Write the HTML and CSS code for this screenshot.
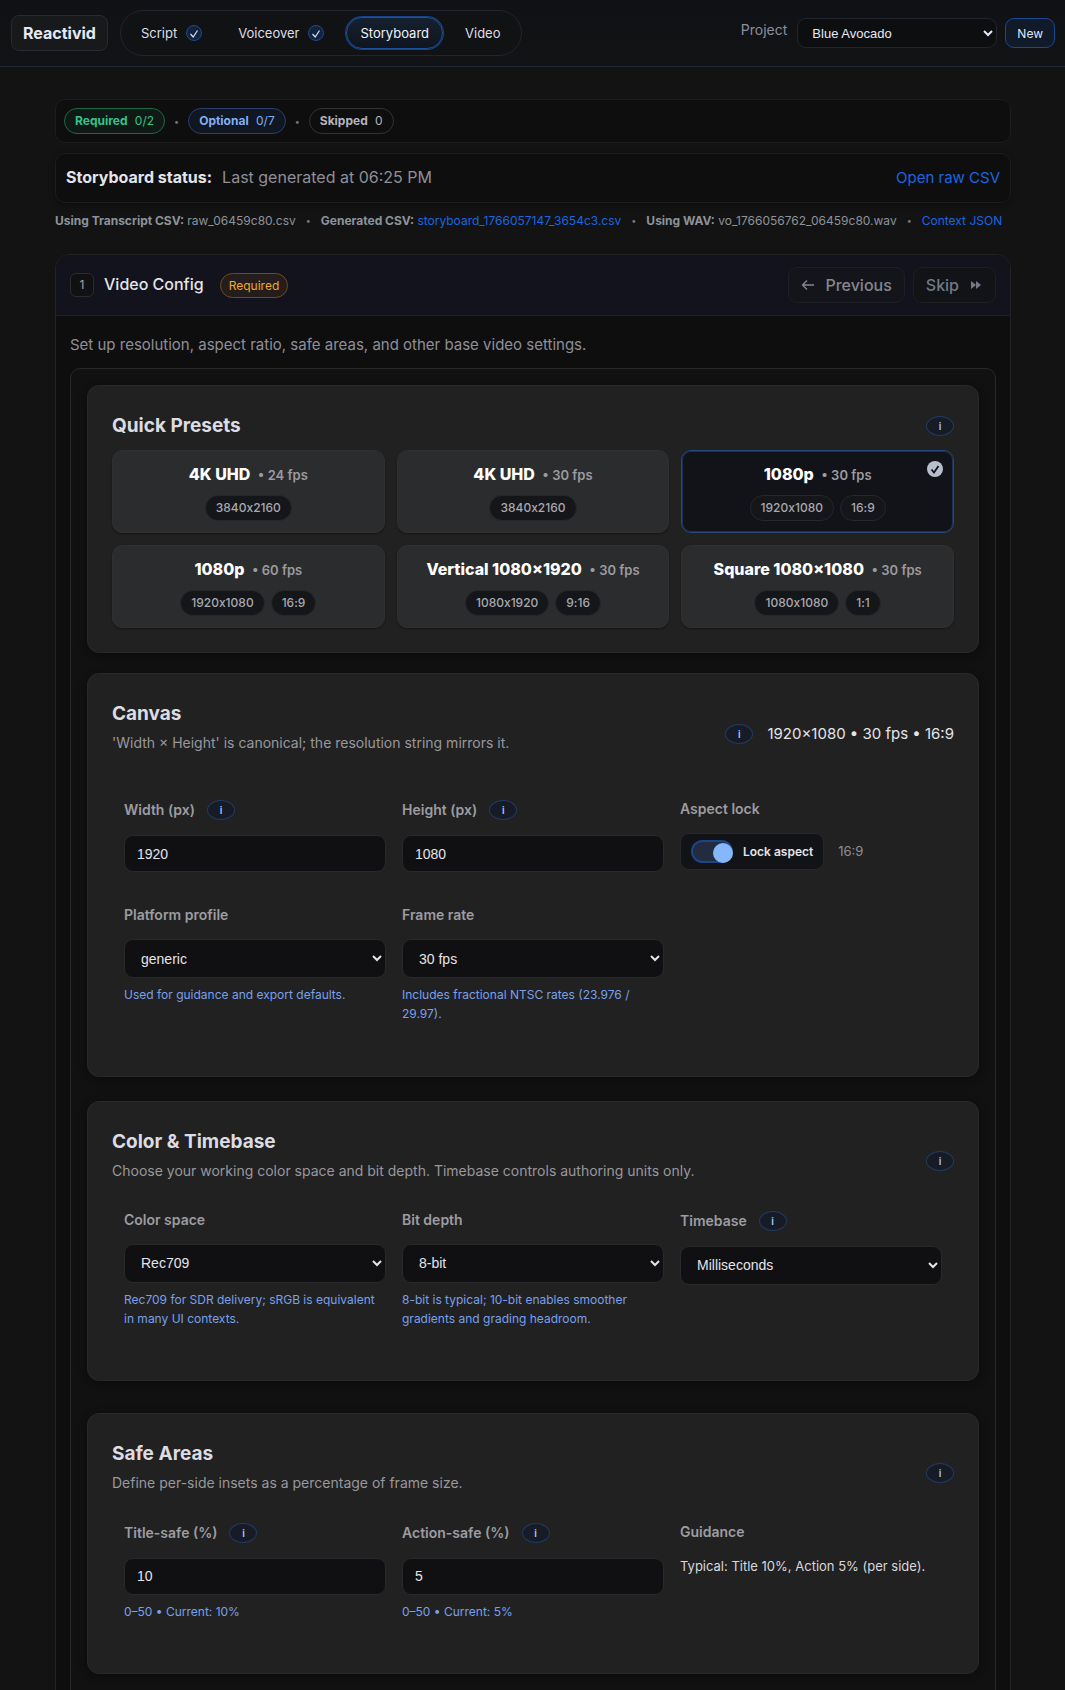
FILE: index.html
```html
<!DOCTYPE html>
<html lang="en">
<head>
  <meta charset="utf-8">
  <meta name="viewport" content="width=device-width, initial-scale=1">
  <title>Reactivid - Storyboard</title>
  <link rel="stylesheet" href="styles.css">
</head>
<body>
  <header class="topbar">
    <a href="#" class="brand">Reactivid</a>
    <nav class="nav">
      <a href="#" class="nav-link">Script
        <svg class="nav-check" viewBox="0 0 16 16"><circle cx="8" cy="8" r="7.5"/><path d="M4.500 9l2.700 3L11.500 5.500"/></svg>
      </a>
      <a href="#" class="nav-link">Voiceover
        <svg class="nav-check" viewBox="0 0 16 16"><circle cx="8" cy="8" r="7.5"/><path d="M4.500 9l2.700 3L11.500 5.500"/></svg>
      </a>
      <a href="#" class="nav-link active">Storyboard</a>
      <a href="#" class="nav-link">Video</a>
    </nav>
    <div class="project">
      <label class="project-label" for="project">Project</label>
      <select id="project" class="project-select">
        <option>Blue Avocado</option>
      </select>
      <button type="button" class="btn-new">New</button>
    </div>
  </header>

  <main class="page">
    <div class="summary">
      <span class="pill pill-required"><b>Required</b> 0/2</span>
      <span class="sep">•</span>
      <span class="pill pill-optional"><b>Optional</b> 0/7</span>
      <span class="sep">•</span>
      <span class="pill"><b>Skipped</b> 0</span>
    </div>

    <div class="status">
      <strong>Storyboard status:</strong>
      <span class="status-text">Last generated at 06:25 PM</span>
      <a href="#" class="status-link">Open raw CSV</a>
    </div>

    <div class="sources">
      <span><b>Using Transcript CSV:</b> raw_06459c80.csv</span>
      <span class="sep">•</span>
      <span><b>Generated CSV:</b> <a href="#">storyboard_1766057147_3654c3.csv</a></span>
      <span class="sep">•</span>
      <span><b>Using WAV:</b> vo_1766056762_06459c80.wav</span>
      <span class="sep">•</span>
      <a href="#">Context JSON</a>
    </div>

    <section class="stage">
      <div class="stage-head">
        <span class="stage-num">1</span>
        <h2 class="stage-title">Video Config</h2>
        <span class="badge">Required</span>
        <div class="stage-actions">
          <button type="button" class="btn">
            <svg class="btn-icon" viewBox="0 0 14 14"><path class="line" d="M13 7H2M6 2.500L1.500 7L6 11.500"/></svg>
            Previous
          </button>
          <button type="button" class="btn btn-skip">
            Skip
            <svg class="btn-icon" viewBox="0 0 14 14"><path d="M2 3v8l5-4zM7 3v8l5-4z"/></svg>
          </button>
        </div>
      </div>
      <div class="stage-body">
        <p class="stage-desc">Set up resolution, aspect ratio, safe areas, and other base video settings.</p>

        <form class="panel">
          <section class="card card-presets">
            <div class="card-head">
              <h3>Quick Presets</h3>
              <button type="button" class="info">i</button>
            </div>
            <div class="presets">
              <button type="button" class="preset">
                <span class="preset-title">4K UHD <small>• 24 fps</small></span>
                <span class="tags"><span class="tag">3840x2160</span></span>
              </button>
              <button type="button" class="preset">
                <span class="preset-title">4K UHD <small>• 30 fps</small></span>
                <span class="tags"><span class="tag">3840x2160</span></span>
              </button>
              <button type="button" class="preset selected">
                <span class="preset-title">1080p <small>• 30 fps</small></span>
                <span class="tags"><span class="tag">1920x1080</span><span class="tag">16:9</span></span>
                <svg class="preset-check" viewBox="0 0 16 16"><circle cx="8" cy="8" r="8"/><path d="M4.500 8.500l2.500 3L11.500 5"/></svg>
              </button>
              <button type="button" class="preset">
                <span class="preset-title">1080p <small>• 60 fps</small></span>
                <span class="tags"><span class="tag">1920x1080</span><span class="tag">16:9</span></span>
              </button>
              <button type="button" class="preset">
                <span class="preset-title">Vertical 1080×1920 <small>• 30 fps</small></span>
                <span class="tags"><span class="tag">1080x1920</span><span class="tag">9:16</span></span>
              </button>
              <button type="button" class="preset">
                <span class="preset-title">Square 1080×1080 <small>• 30 fps</small></span>
                <span class="tags"><span class="tag">1080x1080</span><span class="tag">1:1</span></span>
              </button>
            </div>
          </section>

          <section class="card card-canvas">
            <div class="card-head">
              <div>
                <h3>Canvas</h3>
                <p>'Width × Height' is canonical; the resolution string mirrors it.</p>
              </div>
              <div class="readout">
                <button type="button" class="info">i</button>
                <span>1920×1080 • 30 fps • 16:9</span>
              </div>
            </div>
            <div class="fields">
              <div class="field">
                <div class="field-label"><label for="width">Width (px)</label><button type="button" class="info">i</button></div>
                <input type="text" id="width" value="1920">
              </div>
              <div class="field">
                <div class="field-label"><label for="height">Height (px)</label><button type="button" class="info">i</button></div>
                <input type="text" id="height" value="1080">
              </div>
              <div class="field">
                <div class="field-label">Aspect lock</div>
                <div class="lock-row">
                  <label class="lock">
                    <input type="checkbox" class="switch" checked>
                    Lock aspect
                  </label>
                  <span class="lock-ratio">16:9</span>
                </div>
              </div>
              <div class="field">
                <div class="field-label"><label for="platform">Platform profile</label></div>
                <select id="platform"><option>generic</option></select>
                <p class="hint">Used for guidance and export defaults.</p>
              </div>
              <div class="field">
                <div class="field-label"><label for="fps">Frame rate</label></div>
                <select id="fps"><option>30 fps</option></select>
                <p class="hint">Includes fractional NTSC rates (23.976 / 29.97).</p>
              </div>
            </div>
          </section>

          <section class="card">
            <div class="card-head">
              <div>
                <h3>Color &amp; Timebase</h3>
                <p>Choose your working color space and bit depth. Timebase controls authoring units only.</p>
              </div>
              <button type="button" class="info">i</button>
            </div>
            <div class="fields">
              <div class="field">
                <div class="field-label"><label for="colorspace">Color space</label></div>
                <select id="colorspace"><option>Rec709</option></select>
                <p class="hint">Rec709 for SDR delivery; sRGB is equivalent in many UI contexts.</p>
              </div>
              <div class="field">
                <div class="field-label"><label for="bitdepth">Bit depth</label></div>
                <select id="bitdepth"><option>8-bit</option></select>
                <p class="hint">8-bit is typical; 10-bit enables smoother gradients and grading headroom.</p>
              </div>
              <div class="field">
                <div class="field-label"><label for="timebase">Timebase</label><button type="button" class="info">i</button></div>
                <select id="timebase"><option>Milliseconds</option></select>
              </div>
            </div>
          </section>

          <section class="card">
            <div class="card-head">
              <div>
                <h3>Safe Areas</h3>
                <p>Define per-side insets as a percentage of frame size.</p>
              </div>
              <button type="button" class="info">i</button>
            </div>
            <div class="fields">
              <div class="field">
                <div class="field-label"><label for="titlesafe">Title-safe (%)</label><button type="button" class="info">i</button></div>
                <input type="text" id="titlesafe" value="10">
                <p class="hint">0–50 • Current: 10%</p>
              </div>
              <div class="field">
                <div class="field-label"><label for="actionsafe">Action-safe (%)</label><button type="button" class="info">i</button></div>
                <input type="text" id="actionsafe" value="5">
                <p class="hint">0–50 • Current: 5%</p>
              </div>
              <div class="field">
                <div class="field-label">Guidance</div>
                <p class="guidance">Typical: Title 10%, Action 5% (per side).</p>
              </div>
            </div>
          </section>
        </form>
      </div>
    </section>
  </main>
</body>
</html>
```
FILE: styles.css
```css
* {
  box-sizing: border-box;
}
body {
  margin: 0;
  background-color: #131313;
  color: #e4e4ea;
  font-family: Inter, "Liberation Sans", sans-serif;
  font-size: 16px;
  line-height: 1.6;
}
h2, h3, p {
  margin: 0;
}
a {
  color: #1a66e0;
  text-decoration: none;
}
b, strong {
  font-weight: 700;
}
button {
  font-family: inherit;
  cursor: pointer;
}

/* top bar */
.topbar {
  display: flex;
  align-items: center;
  padding: 10px 10px 10px 11px;
  background: linear-gradient(#101114, #111315);
  border-bottom: 1px solid #232838;
}
.brand {
  padding: 0 11px;
  line-height: 34px;
  border: 1px solid #262a36;
  border-radius: 8px;
  background-color: #17191b;
  color: #e6e9f5;
  font-weight: 700;
}
.nav {
  display: flex;
  gap: 8px;
  margin-left: 12px;
  padding: 6px;
  border: 1px solid #22242f;
  border-radius: 23px;
  background-color: #111214;
}
.nav-link {
  display: flex;
  align-items: center;
  gap: 9px;
  height: 32px;
  padding: 0 13px;
  border: 1px solid transparent;
  border-radius: 16px;
  color: #dcdfe8;
  font-size: 13px;
}
.nav-link.active {
  border-color: #1c4f9c;
  background: linear-gradient(#152030, #10151f);
  box-shadow: 0 0 0 1px #17448a;
  color: #f0f3fa;
}
.nav-check {
  width: 16px;
  height: 16px;
}
.nav-check circle {
  fill: #14233d;
  stroke: #1d4a8f;
}
.nav-check path {
  fill: none;
  stroke: #d5e2f7;
  stroke-width: 1.2;
}
.project {
  display: flex;
  align-items: center;
  gap: 8px;
  margin-left: auto;
}
.project-label {
  margin: 0 2px 6px 0;
  color: #8a8f9f;
  font-size: 14px;
}
.project-select {
  width: 200px;
  height: 30px;
  padding: 0 10px;
  border: 1px solid #22242f;
  border-radius: 9px;
  background-color: #0d0e10;
  color: #e6e9f5;
  font-family: "Liberation Sans", Arial, sans-serif;
  font-size: 13px;
}
.btn-new {
  height: 30px;
  padding: 0 11px;
  border: 1px solid #184a94;
  border-radius: 9px;
  background-color: #111a28;
  color: #dfe6f5;
  font-size: 12px;
}

.page {
  padding: 32px 54px 32px 55px;
}

/* summary rows */
.summary {
  display: flex;
  align-items: center;
  gap: 9px;
  padding: 8px;
  border: 1px solid #1d1d1d;
  border-radius: 10px;
  background-color: #0e0e0e;
}
.sep {
  color: #77777d;
  font-size: 9px;
  line-height: 19px;
}
.pill {
  padding: 0 10px;
  border: 1px solid #333336;
  border-radius: 13px;
  color: #b4b4bc;
  font-size: 12px;
  line-height: 24px;
}
.pill b {
  margin-right: 4px;
}
.pill-required {
  border-color: #1b6b42;
  background-color: #0f1a16;
  color: #34c38a;
}
.pill-optional {
  border-color: #2b3f70;
  background-color: #111623;
  color: #7fb0f5;
}
.status {
  display: flex;
  align-items: center;
  gap: 10px;
  height: 50px;
  margin-top: 10px;
  padding: 0 10px;
  border: 1px solid #1d1d1d;
  border-radius: 10px;
  background-color: #0e0e0e;
  box-shadow: 0 2px 6px rgba(0, 0, 0, 0.3);
}
.status-text {
  color: #8f8f99;
}
.status-link {
  margin-left: auto;
  font-size: 15px;
}
.sources {
  display: flex;
  flex-wrap: wrap;
  gap: 10px;
  margin: 8px 0 24px;
  color: #8d939c;
  font-size: 12px;
}

/* stage */
.stage {
  border: 1px solid #232326;
  border-radius: 14px;
  background-color: #0e0e0e;
  overflow: hidden;
}
.stage-head {
  display: flex;
  align-items: center;
  padding: 12px 14px;
  border-bottom: 1px solid #1f1f28;
  background-color: #13131d;
}
.stage-num {
  width: 24px;
  border: 1px solid #2c2c30;
  border-radius: 6px;
  background-color: #111114;
  color: #a5a5ad;
  font-size: 12px;
  line-height: 22px;
  text-align: center;
}
.stage-title {
  margin: 0 16px 0 10px;
  font-size: 16px;
  font-weight: 500;
}
.badge {
  padding: 0 8px;
  border: 1px solid #6e4c18;
  border-radius: 13px;
  background-color: #241d1c;
  color: #f0a92c;
  font-size: 12px;
  line-height: 23px;
}
.stage-actions {
  display: flex;
  gap: 8px;
  margin-left: auto;
}
.btn {
  display: flex;
  align-items: center;
  gap: 10px;
  height: 36px;
  padding: 0 12px;
  border: 1px solid #1e1f25;
  border-radius: 9px;
  background-color: #14151b;
  color: #85868f;
  font-size: 16px;
  font-weight: 500;
}
.btn-skip {
  background-color: #121317;
  color: #737985;
}
.btn-icon {
  width: 14px;
  height: 14px;
  fill: #737985;
}
.btn-icon .line {
  fill: none;
  stroke: #85868f;
  stroke-width: 1.3;
}
.stage-body {
  padding: 16px 14px;
}
.stage-desc {
  margin-bottom: 10px;
  color: #8f8f99;
  font-size: 15px;
  line-height: 26px;
}
.panel {
  padding: 16px;
  border: 1px solid #29292b;
  border-radius: 10px;
  background-color: #111111;
}

/* cards */
.card {
  margin-bottom: 32px;
  padding: 24px;
  border: 1px solid #29292a;
  border-radius: 12px;
  background-color: #212121;
  box-shadow: 0 2px 8px rgba(0, 0, 0, 0.4);
}
.card-presets {
  margin-bottom: 20px;
}
.card-canvas {
  margin-bottom: 24px;
}
.card-head {
  display: flex;
  align-items: center;
  justify-content: space-between;
}
.card-presets .card-head {
  margin-bottom: 8px;
}
.card-canvas .card-head {
  margin-bottom: 17px;
}
.card-head h3 {
  color: #dcdce4;
  font-size: 19px;
  font-weight: 700;
  line-height: 32px;
}
.card-head p {
  margin: 2px 0 15px;
  color: #98989e;
  font-size: 14px;
  line-height: 22px;
}
.readout {
  display: flex;
  align-items: center;
  gap: 14px;
  font-size: 15px;
}
.info {
  width: 28px;
  height: 20px;
  padding: 0;
  border: 1px solid #223a63;
  border-radius: 50%;
  background-color: #171b26;
  color: #a5c8ff;
  font-size: 10px;
  font-weight: 600;
}
.presets {
  display: grid;
  grid-template-columns: repeat(3, 1fr);
  gap: 12px;
}
.preset {
  position: relative;
  display: flex;
  flex-direction: column;
  align-items: center;
  gap: 8px;
  padding: 10px 8px 11px;
  border: 1px solid #303031;
  border-radius: 10px;
  background-color: #2b2c2d;
  box-shadow: 0 1px 2px rgba(0, 0, 0, 0.4);
  color: #ffffff;
}
.preset.selected {
  border-color: #28477c;
  background-color: #121318;
  box-shadow: 0 0 0 1px #1c3158 inset;
}
.preset-title {
  font-size: 16px;
  font-weight: 800;
  line-height: 26px;
}
.preset-title small {
  margin-left: 4px;
  color: #9b9ba0;
  font-size: 13px;
  font-weight: 600;
  line-height: 1;
}
.tags {
  display: flex;
  gap: 6px;
}
/* keep the plain "x" in 1920x1080, Inter swaps it for a multiplication sign */
.tag {
  padding: 0 10px;
  border: 1px solid #26272a;
  border-radius: 13px;
  background-color: #15161a;
  color: #a9a9ae;
  font-size: 12px;
  font-weight: 500;
  font-variant-ligatures: no-contextual;
  line-height: 24px;
}
.preset-check {
  position: absolute;
  top: 10px;
  right: 10px;
  width: 16px;
  height: 16px;
}
.preset-check circle {
  fill: #b8bfcc;
}
.preset-check path {
  fill: none;
  stroke: #121318;
  stroke-width: 1.8;
}

/* form fields */
.fields {
  display: grid;
  grid-template-columns: repeat(3, 1fr);
  gap: 16px;
  padding: 12px;
}
.field {
  margin-bottom: 16px;
}
.field-label {
  display: flex;
  align-items: center;
  gap: 12px;
  margin-bottom: 13px;
  color: #9c9ca1;
  font-size: 14px;
  font-weight: 600;
  line-height: 22px;
}
.field-label .info {
  margin: 2px 0;
}
.field input[type="text"],
.field select {
  display: block;
  width: 100%;
  height: 39px;
  padding: 0 12px;
  border: 1px solid #29292b;
  border-radius: 9px;
  background-color: #101012;
  color: #e4e4ea;
  font-family: "Liberation Sans", Arial, sans-serif;
  font-size: 14px;
}
.field input[type="text"] {
  height: 37px;
}
.hint {
  margin-top: 7px;
  color: #78a0ee;
  font-size: 12px;
}
.guidance {
  color: #d8d8de;
  font-size: 13px;
}
.lock-row {
  display: flex;
  align-items: center;
  gap: 14px;
}
.lock {
  display: flex;
  align-items: center;
  gap: 10px;
  height: 37px;
  padding: 0 10px;
  border: 1px solid #26272b;
  border-radius: 9px;
  background-color: #121317;
  font-size: 12px;
  font-weight: 600;
}
.switch {
  appearance: none;
  display: flex;
  align-items: flex-end;
  justify-content: flex-end;
  width: 42px;
  height: 23px;
  margin: 0;
  border: 2px solid #1c4585;
  border-radius: 12px;
  background-color: #222b40;
}
.switch::before {
  content: "";
  width: 20px;
  height: 20px;
  margin: 0 -2px -2px 0;
  border-radius: 50%;
  background-color: #86b7fb;
}
.lock-ratio {
  color: #8f8f95;
  font-size: 13px;
}
```
